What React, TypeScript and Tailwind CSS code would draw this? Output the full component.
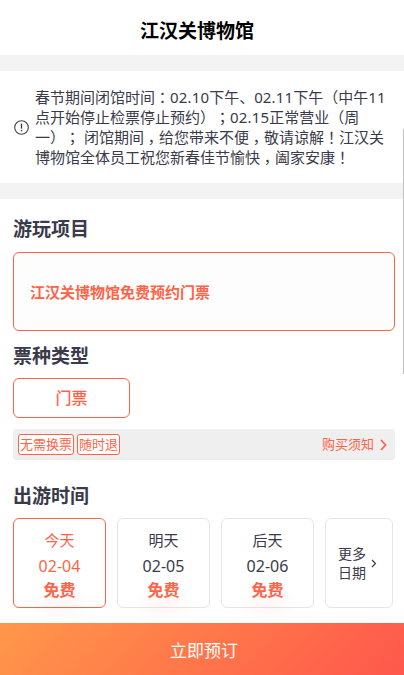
import type { ReactNode } from 'react';

const days = [
  { label: '今天', date: '02-04', price: '免费' },
  { label: '明天', date: '02-05', price: '免费' },
  { label: '后天', date: '02-06', price: '免费' },
];

const tags = ['无需换票', '随时退'];

// full width marks sit in the middle of their cell
const Mark = ({ children }: { children: ReactNode }) => (
  <span className="font-['Noto_Sans_CJK_TC',sans-serif]">{children}</span>
);

// half width comma padded back to a full cell
const Comma = () => (
  <span className="px-[3.75px] font-['Noto_Sans_CJK_SC',sans-serif] [font-feature-settings:'halt']">，</span>
);

const Num = ({ children }: { children: ReactNode }) => (
  <span className="tracking-[0.15px]">{children}</span>
);

const Title = ({ children }: { children: ReactNode }) => (
  <h2 className="h-[26px] text-[19px] leading-[26px] font-bold whitespace-nowrap">{children}</h2>
);

const Notice = () => (
  <div className="flex h-[112px] items-center bg-white pl-[14px]">
    <svg className="mr-[6px] shrink-0" width="15" height="15" viewBox="0 0 15 15" fill="none">
      <circle cx="7.5" cy="7.5" r="6.8" stroke="#3f3f4d" strokeWidth="1.1" />
      <path d="M7.5 3.6v5" stroke="#3f3f4d" strokeWidth="1.4" />
      <path d="M7.5 9.8v1.5" stroke="#3f3f4d" strokeWidth="1.4" />
    </svg>
    <p className="text-[15px] leading-[20px] whitespace-nowrap [text-spacing-trim:space-all]">
      春节期间闭馆时间<Mark>：</Mark>
      <Num>02.10</Num>下午、<Num>02.11</Num>下午（中午<Num>11</Num>
      <br />
      点开始停止检票停止预约）<Mark>；</Mark>
      <Num>02.15</Num>正常营业（周
      <br />
      一）<Mark>；</Mark> 闭馆期间<Comma />给您带来不便<Comma />敬请谅解<Mark>！</Mark>江汉关
      <br />
      博物馆全体员工祝您新春佳节愉快<Comma />阖家安康<Mark>！</Mark>
    </p>
  </div>
);

const DayCard = ({ day, active }: { day: (typeof days)[number]; active: boolean }) => (
  <div
    className={`relative flex h-[90px] w-[93px] flex-col items-center rounded-[6px] border pt-[10px] ${
      active ? 'border-[#ff6347] text-[#ff6347]' : 'border-[#e5e5e9]'
    }`}
  >
    <div className="h-[22px] text-[15px] leading-[22px]">{day.label}</div>
    <div className="mt-[3px] h-[24px] text-[16px] leading-[24px]">{day.date}</div>
    <div className="h-[24px] text-[16px] leading-[24px] font-bold text-[#ff6347]">{day.price}</div>
    <div className="absolute -bottom-[15px] left-[14px] h-[35px] w-[64px] bg-[radial-gradient(closest-side,rgba(255,90,90,0.06),transparent)]" />
  </div>
);

const App = () => {
  return (
    <div className="relative flex h-[675px] w-[404px] flex-col overflow-hidden bg-[#f3f3f3] font-['Noto_Sans','Noto_Sans_CJK_SC',sans-serif] text-[#3a3a4a]">
      <header className="flex h-[55px] items-center justify-center bg-white pt-[7px] pr-[10px] text-[19px] font-bold text-black">
        江汉关博物馆
      </header>
      <div className="h-4" />
      <Notice />
      <div className="h-4" />

      <main className="flex-1 bg-white pt-[17px] pl-[13px]">
        <Title>游玩项目</Title>
        <div className="mt-[10px] flex h-[79px] w-[382px] items-center rounded-[6px] border border-[#ff6347] bg-[#fdfdfd] pt-[2px] pl-[16px] text-[15px] font-bold text-[#ff6347]">
          江汉关博物馆免费预约门票
        </div>

        <div className="mt-[12px]">
          <Title>票种类型</Title>
        </div>
        <div className="mt-[9px] flex h-[40px] w-[117px] items-center justify-center rounded-[6px] border border-[#ff6347] text-[16px] font-medium text-[#ff6347]">
          门票
        </div>
        <div className="mt-[11px] flex h-[31px] w-[382px] items-center gap-[3px] rounded-[3px] bg-[#efefef] px-[5px] text-[13px] text-[#ff6347]">
          {tags.map((tag) => (
            <span
              key={tag}
              className="flex h-[21px] items-center rounded-[3px] border border-[#ff6347] bg-white px-[1px] leading-[19px]"
            >
              {tag}
            </span>
          ))}
          <span className="mr-[3px] ml-auto">购买须知</span>
          <svg className="mr-[3px]" width="7" height="12" viewBox="0 0 7 12" fill="none">
            <path d="M1 1l4.6 5L1 11" stroke="#ff6347" strokeWidth="1.7" />
          </svg>
        </div>

        <div className="mt-[23px]">
          <Title>出游时间</Title>
        </div>
        <div className="mt-[9px] flex gap-[11px]">
          {days.map((day, i) => (
            <DayCard key={day.date} day={day} active={i === 0} />
          ))}
          <div className="flex h-[90px] w-[68px] items-center rounded-[6px] border border-[#e5e5e9] pl-[12px] text-[14px] leading-[19px]">
            <span>
              更多
              <br />
              日期
            </span>
            <svg className="ml-[5px]" width="6" height="9" viewBox="0 0 6 9" fill="none">
              <path d="M1 1l3.5 3.5L1 8" stroke="#3a3a4a" strokeWidth="1.2" />
            </svg>
          </div>
        </div>
      </main>

      <button className="z-10 flex h-[52px] shrink-0 items-center justify-center bg-[linear-gradient(135deg,#ff984a,#ff774a_50%,#ff574d)] pt-[4px] pl-[4px] text-[17px] text-white">
        立即预订
      </button>

      {/* scroll thumb */}
      <div className="absolute top-[129px] right-0 h-[245px] w-px bg-[#c1c1c1]" />
    </div>
  );
};

export default App;
